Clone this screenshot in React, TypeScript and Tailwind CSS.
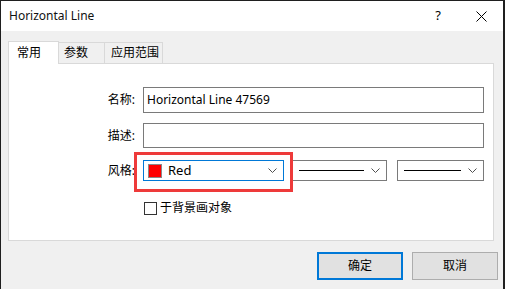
import React from "react";

const font = { fontFamily: '"Noto Sans", "Noto Sans CJK SC", sans-serif' };

const Chevron = () => (
  <svg width="9" height="6" viewBox="0 0 9 6" className="shrink-0">
    <path d="M0.5 0.5 L4.5 4.5 L8.5 0.5" fill="none" stroke="#505050" strokeWidth="1" />
  </svg>
);

const LineCombo = ({ width, lineWidth }: { width: string; lineWidth: string }) => (
  <div className={`${width} h-[21px] border border-[#7a7a7a] bg-white flex items-center pl-[6px] pr-[6px]`}>
    <div className={`${lineWidth} h-px bg-black`} />
    <div className="ml-auto">
      <Chevron />
    </div>
  </div>
);

export default function App() {
  return (
    <div className="w-[505px] h-[289px] bg-[#1f1f1f] pt-px pl-px pr-[2px] overflow-hidden" style={font}>
      <div className="h-[288px] flex flex-col bg-[#f0f0f0] text-[12px] text-black">
        {/* Title bar */}
        <div className="h-[30px] bg-white flex items-center pl-[8px] shrink-0">
          <span className="text-[12px] text-[#111]">Horizontal Line</span>
          <span className="ml-auto mr-[35px] text-[13px]">?</span>
          <svg width="11" height="11" viewBox="0 0 11 11" className="mr-[16px]">
            <path d="M0.5 0.5 L10.5 10.5 M10.5 0.5 L0.5 10.5" stroke="#000" strokeWidth="1" />
          </svg>
        </div>

        {/* Tabs */}
        <div className="pl-[7px] pt-[10px] flex items-end h-[32px] shrink-0">
          <div className="w-[51px] h-[23px] bg-white border border-b-0 border-[#d9d9d9] pl-[8px] flex items-center relative z-10 -mb-px">
            常用
          </div>
          <div className="w-[46px] h-[21px] border-t border-r border-[#d9d9d9] pl-[5px] flex items-center">参数</div>
          <div className="w-[58px] h-[21px] border-t border-r border-[#d9d9d9] pl-[6px] flex items-center">应用范围</div>
        </div>

        {/* Panel */}
        <div className="ml-[7px] w-[486px] h-[178px] bg-white border border-[#d9d9d9] pt-[23px] flex flex-col shrink-0">
          <div className="flex items-center">
            <div className="w-[133px] text-right pr-[7px]">名称:</div>
            <div className="ml-px w-[341px] h-[26px] border border-[#7a7a7a] flex items-center pl-[3px]">
              Horizontal Line 47569
            </div>
          </div>
          <div className="flex items-center mt-[10px]">
            <div className="w-[133px] text-right pr-[7px]">描述:</div>
            <div className="ml-px w-[341px] h-[25px] border border-[#7a7a7a]" />
          </div>
          <div className="flex items-center mt-[12px]">
            <div className="w-[133px] text-right pr-[7px]">风格:</div>
            <div className="ml-px relative w-[141px] h-[21px] border border-[#0078d7] flex items-center pl-[4px] pr-[6px]">
              <div className="w-[14px] h-[14px] bg-[#ff0000] border border-[#8a8a8a]" />
              <span className="ml-[6px] text-[13px]">Red</span>
              <div className="ml-auto">
                <Chevron />
              </div>
              <div className="absolute left-[-10px] top-[-9px] w-[159px] h-[40px] border-[3px] border-[#ee3a3a]" />
            </div>
            <div className="ml-[8px]">
              <LineCombo width="w-[95px]" lineWidth="w-[65px]" />
            </div>
            <div className="ml-[10px]">
              <LineCombo width="w-[87px]" lineWidth="w-[57px]" />
            </div>
          </div>
          <div className="flex items-center mt-[18px] ml-[135px]">
            <div className="w-[13px] h-[13px] border border-[#333] bg-white" />
            <span className="ml-[3px]">于背景画对象</span>
          </div>
        </div>

        {/* Buttons */}
        <div className="flex justify-end gap-[9px] pr-[5px] mt-[11px]">
          <div className="w-[86px] h-[28px] bg-[#e1e1e1] border-2 border-[#0078d7] flex items-center justify-center">确定</div>
          <div className="w-[86px] h-[28px] bg-[#e1e1e1] border border-[#adadad] flex items-center justify-center">取消</div>
        </div>
      </div>
    </div>
  );
}
